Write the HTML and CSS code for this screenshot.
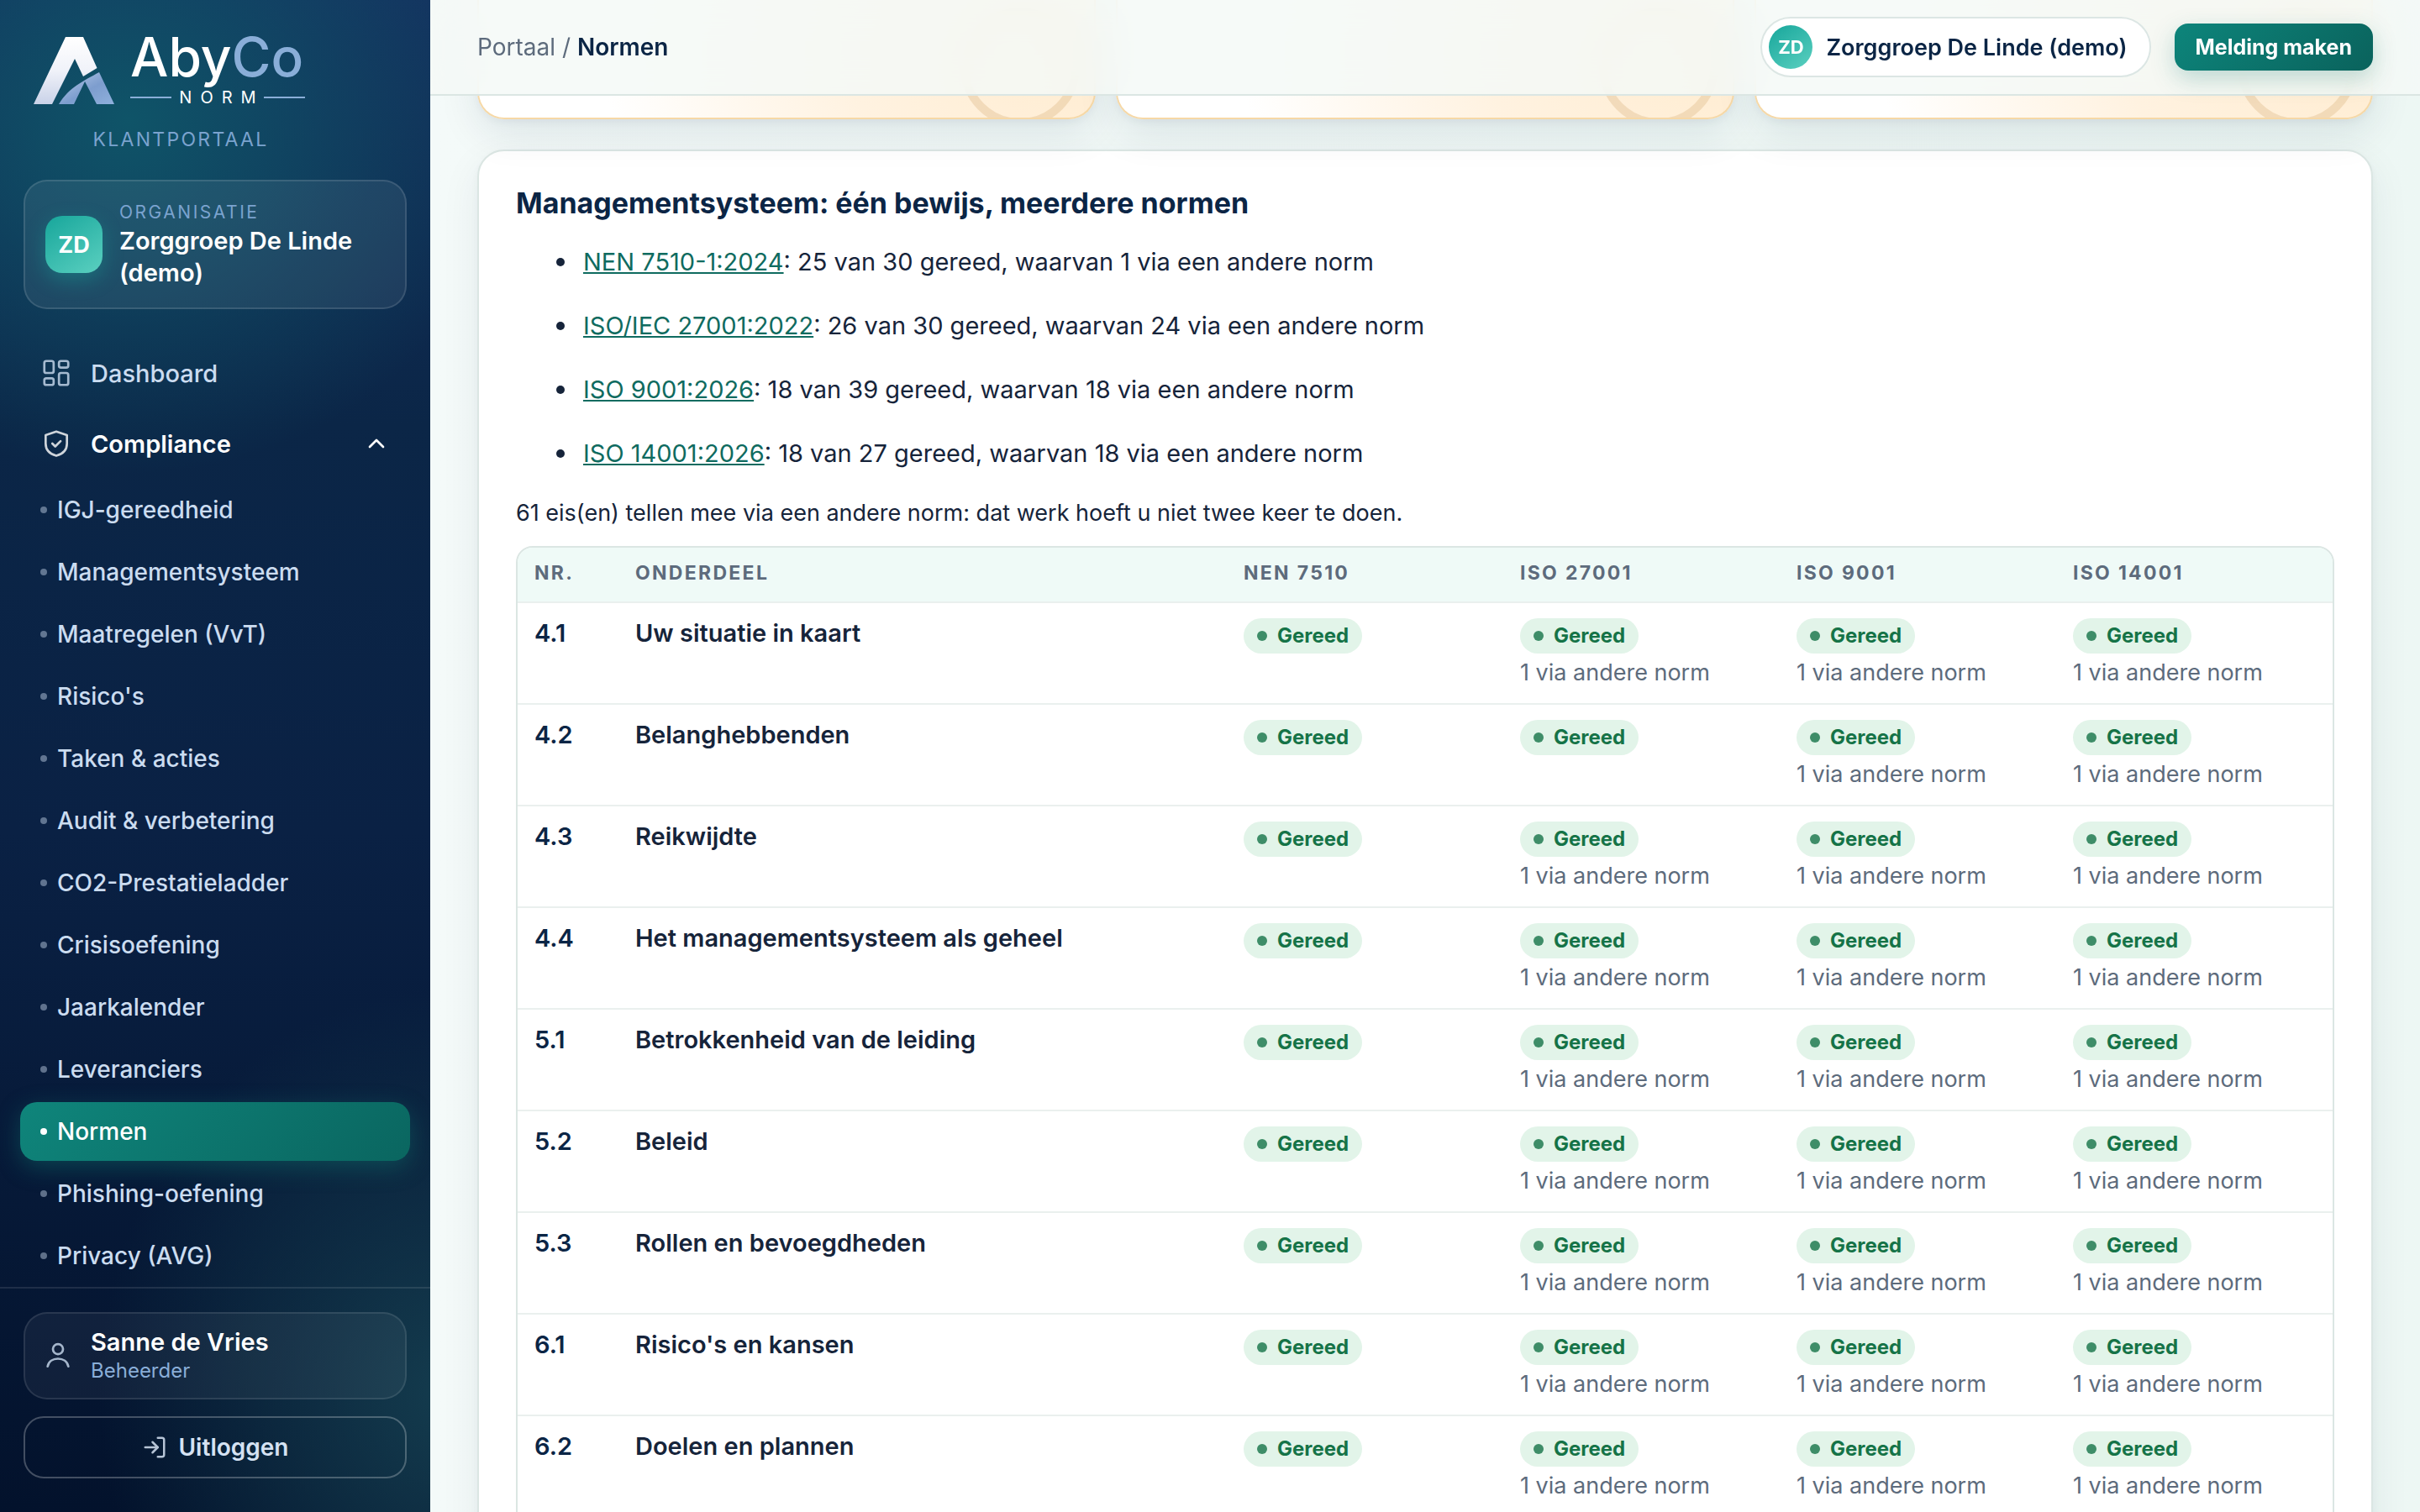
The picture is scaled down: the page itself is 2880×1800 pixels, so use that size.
FILE: index.html
```html
<!DOCTYPE html>
<html lang="nl">
<head>
  <meta charset="UTF-8" />
  <title>Normen - AbyCo Norm klantportaal</title>
  <meta name="viewport" content="width=device-width, initial-scale=1.0" />
  <link rel="stylesheet" href="styles.css">
</head>
<body>

<aside class="sidebar">
  <div class="brand">
    <div class="logo">
      <svg class="logo-mark" viewBox="0 0 97 80" aria-hidden="true">
        <defs>
          <linearGradient id="markLight" x1="0" y1="0" x2="0" y2="1">
            <stop offset="0" stop-color="#ffffff" />
            <stop offset="0.5" stop-color="#f0f2f9" />
            <stop offset="1" stop-color="#c9d2e8" />
          </linearGradient>
          <linearGradient id="markBlue" x1="0" y1="0" x2="1" y2="1">
            <stop offset="0" stop-color="#b9cdea" />
            <stop offset="0.55" stop-color="#7d9dce" />
            <stop offset="1" stop-color="#8fb0dc" />
          </linearGradient>
        </defs>
        <path fill="url(#markLight)" d="M38 0h21l16.500 37L59 47 49 26 22 80H0z" />
        <path fill="url(#markBlue)" d="M78 42l18 38H75L61 53 48 80H30C42 60 60 52 78 42z" />
      </svg>
      <div class="wordmark">
        <span class="wordmark-name">Aby<span>Co</span></span>
        <span class="wordmark-sub"><span>NORM</span></span>
      </div>
    </div>
    <div class="brand-label">KLANTPORTAAL</div>
  </div>

  <div class="org-card">
    <span class="avatar">ZD</span>
    <div>
      <div class="org-label">ORGANISATIE</div>
      <div class="org-name">Zorggroep De Linde (demo)</div>
    </div>
  </div>

  <nav class="nav">
    <a class="nav-item" href="#">
      <svg class="icon" viewBox="0 0 24 24"><rect x="3" y="3" width="7" height="9" rx="1.500" /><rect x="14" y="3" width="7" height="5" rx="1.500" /><rect x="14" y="12" width="7" height="9" rx="1.500" /><rect x="3" y="16" width="7" height="5" rx="1.500" /></svg>
      Dashboard
    </a>
    <button class="nav-item nav-open" type="button" aria-expanded="true">
      <svg class="icon" viewBox="0 0 24 24"><path d="M12 3l8 2.700V12c0 5-3.500 8-8 9.200C7.500 20 4 17 4 12V5.700z" /><path d="M9 12l2.200 2.200L15.200 10.200" /></svg>
      Compliance
      <svg class="chevron" viewBox="0 0 24 24"><path d="M6 15l6-6 6 6" /></svg>
    </button>
    <div class="subnav">
      <a href="#">IGJ-gereedheid</a>
      <a href="#">Managementsysteem</a>
      <a href="#">Maatregelen (VvT)</a>
      <a href="#">Risico's</a>
      <a href="#">Taken &amp; acties</a>
      <a href="#">Audit &amp; verbetering</a>
      <a href="#">CO2-Prestatieladder</a>
      <a href="#">Crisisoefening</a>
      <a href="#">Jaarkalender</a>
      <a href="#">Leveranciers</a>
      <a class="active" href="#">Normen</a>
      <a href="#">Phishing-oefening</a>
      <a href="#">Privacy (AVG)</a>
    </div>
  </nav>

  <div class="sidebar-footer">
    <div class="user-card">
      <svg class="icon" viewBox="0 0 24 24"><circle cx="12" cy="7" r="3.800" /><path d="M4.200 20c.8-3.800 4-5.800 7.800-5.800s7 2 7.800 5.800" /></svg>
      <div>
        <div class="user-name">Sanne de Vries</div>
        <div class="user-role">Beheerder</div>
      </div>
    </div>
    <button class="logout" type="button">
      <svg viewBox="0 0 24 24"><path d="M15 3h4a2 2 0 0 1 2 2v14a2 2 0 0 1-2 2h-4" /><path d="M10 17l5-5-5-5" /><path d="M15 12H3" /></svg>
      Uitloggen
    </button>
  </div>
</aside>

<main class="main">
  <header class="topbar">
    <div class="crumbs"><a href="#">Portaal</a> / <strong>Normen</strong></div>
    <div class="topbar-right">
      <div class="org-pill"><span class="avatar">ZD</span>Zorggroep De Linde (demo)</div>
      <button class="btn" type="button">Melding maken</button>
    </div>
  </header>

  <div class="content">
    <div class="cards">
      <div class="card"></div>
      <div class="card"></div>
      <div class="card"></div>
    </div>

    <section class="panel">
      <h2>Managementsysteem: één bewijs, meerdere normen</h2>
      <ul>
        <li><a href="#">NEN 7510-1:2024</a>: 25 van 30 gereed, waarvan 1 via een andere norm</li>
        <li><a href="#">ISO/IEC 27001:2022</a>: 26 van 30 gereed, waarvan 24 via een andere norm</li>
        <li><a href="#">ISO 9001:2026</a>: 18 van 39 gereed, waarvan 18 via een andere norm</li>
        <li><a href="#">ISO 14001:2026</a>: 18 van 27 gereed, waarvan 18 via een andere norm</li>
      </ul>
      <p>61 eis(en) tellen mee via een andere norm: dat werk hoeft u niet twee keer te doen.</p>

      <div class="table-wrap">
        <table>
          <thead>
            <tr>
              <th class="col-nr">NR.</th>
              <th>ONDERDEEL</th>
              <th class="col-norm">NEN 7510</th>
              <th class="col-norm">ISO 27001</th>
              <th class="col-norm">ISO 9001</th>
              <th class="col-norm">ISO 14001</th>
            </tr>
          </thead>
          <tbody id="normRows"></tbody>
        </table>
      </div>
    </section>
  </div>
</main>

<script>
(() => {
  // number, title, count taken over from another norm per column
  const rows = [
    ['4.1', 'Uw situatie in kaart', [0, 1, 1, 1]],
    ['4.2', 'Belanghebbenden', [0, 0, 1, 1]],
    ['4.3', 'Reikwijdte', [0, 1, 1, 1]],
    ['4.4', 'Het managementsysteem als geheel', [0, 1, 1, 1]],
    ['5.1', 'Betrokkenheid van de leiding', [0, 1, 1, 1]],
    ['5.2', 'Beleid', [0, 1, 1, 1]],
    ['5.3', 'Rollen en bevoegdheden', [0, 1, 1, 1]],
    ['6.1', "Risico's en kansen", [0, 1, 1, 1]],
    ['6.2', 'Doelen en plannen', [0, 1, 1, 1]]
  ];

  const statusCell = via => `<td class="status"><span class="badge">Gereed</span>${via ? `<div class="via">${via} via andere norm</div>` : ''}</td>`;

  document.getElementById('normRows').innerHTML = rows.map(([nr, title, via]) =>
    `<tr><td class="nr">${nr}</td><td class="title">${title}</td>${via.map(statusCell).join('')}</tr>`
  ).join('');
})();
</script>
</body>
</html>
```
FILE: styles.css
```css
*,
*::before,
*::after {
  box-sizing: border-box;
}

body {
  margin: 0;
  height: 100vh;
  display: grid;
  grid-template-columns: 512px 1fr;
  overflow: hidden;
  font-family: Inter, "Liberation Sans", sans-serif;
  color: #16243a;
  background: #f1f8f6;
}

a {
  color: inherit;
  text-decoration: none;
}

button {
  font-family: inherit;
  cursor: pointer;
}

svg {
  flex: none;
  fill: none;
  stroke: currentColor;
  stroke-linecap: round;
  stroke-linejoin: round;
}

/* Sidebar */
.sidebar {
  height: 100vh;
  display: flex;
  flex-direction: column;
  color: #cbdcf0;
  background:
    radial-gradient(460px 420px at 30% 8%, #0f5468 0%, #0f546800 100%),
    radial-gradient(420px 480px at 105% 92%, #143c4e 0%, #143c4e00 100%),
    linear-gradient(180deg, #14305f 0%, #0b2647 28%, #0a2144 55%, #03122c 100%);
}

.brand {
  width: 390px;
  padding: 44px 0 34px 40px;
}

.logo {
  display: flex;
  gap: 18px;
}

.logo-mark {
  width: 97px;
  height: 80px;
  stroke: none;
}

.wordmark {
  width: 208px;
}

.wordmark-name {
  display: block;
  font-size: 64px;
  font-weight: 500;
  line-height: 48px;
  color: #fff;
}

.wordmark-name span {
  color: #8aaed8;
}

.wordmark-sub {
  display: flex;
  align-items: center;
  gap: 9px;
  margin-top: 14px;
  font-size: 20px;
  line-height: 20px;
  color: #fff;
}

.wordmark-sub span {
  letter-spacing: 10px;
  margin-right: -10px;
}

.wordmark-sub::before,
.wordmark-sub::after {
  content: "";
  flex: 1;
  height: 2px;
  background: #8aaed8;
}

.brand-label {
  margin-top: 26px;
  font-size: 23px;
  line-height: 28px;
  letter-spacing: 0.1em;
  text-align: center;
  color: #7ba3cf;
}

.org-card {
  margin: 0 28px;
  padding: 22px 24px;
  display: flex;
  align-items: center;
  gap: 20px;
  border: 2px solid #ffffff1f;
  border-radius: 28px;
  background: #ffffff12;
}

.avatar {
  flex: none;
  width: 68px;
  height: 68px;
  display: flex;
  align-items: center;
  justify-content: center;
  border-radius: 20px;
  font-size: 27px;
  font-weight: 700;
  color: #fff;
  background: linear-gradient(145deg, #17a69b, #5bd0c0);
  box-shadow: 0 8px 24px #14b8a655;
}

.org-label {
  font-size: 21px;
  line-height: 30px;
  letter-spacing: 0.12em;
  color: #7ba3cf;
}

.org-name {
  font-size: 29px;
  font-weight: 600;
  line-height: 38px;
  color: #fff;
}

.nav {
  flex: 1;
  min-height: 0;
  overflow: hidden;
  margin-top: 36px;
  padding: 0 24px;
  display: flex;
  flex-direction: column;
  gap: 4px;
}

.nav-item {
  flex: none;
  height: 80px;
  padding: 0 24px;
  display: flex;
  align-items: center;
  gap: 22px;
  border: 0;
  background: none;
  font-size: 29px;
  font-weight: 500;
  color: #cbdcf0;
}

.nav-open {
  font-weight: 600;
  color: #fff;
}

.icon {
  width: 38px;
  height: 38px;
  stroke-width: 1.7;
  opacity: 0.8;
}

.chevron {
  width: 32px;
  height: 32px;
  margin-left: auto;
  stroke-width: 2;
}

.subnav {
  display: flex;
  flex-direction: column;
  gap: 4px;
}

.subnav a {
  flex: none;
  height: 70px;
  padding: 0 24px;
  display: flex;
  align-items: center;
  gap: 12px;
  border-radius: 20px;
  font-size: 28px;
  font-weight: 500;
}

.subnav a::before {
  content: "";
  width: 8px;
  height: 8px;
  border-radius: 50%;
  background: currentColor;
  opacity: 0.45;
}

.subnav .active {
  color: #fff;
  background: linear-gradient(135deg, #0f857b, #0a6660);
  box-shadow: 0 8px 28px #0f766e73;
}

.subnav .active::before {
  opacity: 1;
}

.sidebar-footer {
  padding: 28px 28px 40px;
  display: flex;
  flex-direction: column;
  gap: 20px;
  border-top: 2px solid #ffffff1a;
}

.user-card {
  padding: 16px 20px;
  display: flex;
  align-items: center;
  gap: 20px;
  border: 2px solid #ffffff1a;
  border-radius: 28px;
  background: #ffffff0d;
}

.user-name {
  font-size: 29px;
  font-weight: 600;
  line-height: 36px;
  color: #fff;
}

.user-role {
  font-size: 24px;
  line-height: 32px;
  color: #8aaed8;
}

.logout {
  height: 74px;
  display: flex;
  align-items: center;
  justify-content: center;
  gap: 14px;
  border: 2px solid #ffffff40;
  border-radius: 24px;
  background: none;
  font-size: 28px;
  font-weight: 600;
  color: #d5e2f3;
}

.logout svg {
  width: 30px;
  height: 30px;
  stroke-width: 2;
  opacity: 0.85;
}

/* Main column */
.main {
  height: 100vh;
  overflow-y: auto;
  scrollbar-width: none;
  background: linear-gradient(90deg, #f4faf9, #edf7f4);
}

.topbar {
  position: sticky;
  top: 0;
  z-index: 2;
  height: 114px;
  padding: 0 56px;
  display: flex;
  align-items: center;
  justify-content: space-between;
  border-bottom: 2px solid #dbe6e3;
  background: #f4f9f7d9;
  backdrop-filter: blur(20px);
}

.crumbs {
  font-size: 28px;
  color: #5d6b7c;
}

.crumbs strong {
  font-weight: 600;
  color: #0b2545;
}

.topbar-right {
  display: flex;
  align-items: center;
  gap: 28px;
}

.org-pill {
  height: 72px;
  padding: 0 26px 0 8px;
  display: flex;
  align-items: center;
  gap: 16px;
  border: 2px solid #dce6e4;
  border-radius: 36px;
  background: #fff;
  font-size: 27px;
  font-weight: 600;
  color: #0b2545;
}

.org-pill .avatar {
  width: 52px;
  height: 52px;
  border-radius: 50%;
  font-size: 22px;
  box-shadow: none;
}

.btn {
  height: 56px;
  padding: 0 25px;
  border: 0;
  border-radius: 16px;
  font-size: 25px;
  font-weight: 700;
  color: #fff;
  background: linear-gradient(135deg, #0d857b, #0a625c);
  box-shadow: 0 10px 28px #0f766e40;
}

.content {
  padding: 0 56px 56px;
}

/* the cards have scrolled away under the topbar */
.cards {
  margin-top: -114px;
  display: grid;
  grid-template-columns: repeat(3, 1fr);
  gap: 24px;
}

.card {
  position: relative;
  height: 142px;
  overflow: hidden;
  border: 2px solid #f6d8a6;
  border-top: 0;
  border-radius: 0 0 32px 32px;
  background: radial-gradient(100% 300% at 100% 50%, #ffecd0 0%, #fff2e0 40%, #fff 80%);
  box-shadow: 0 4px 8px #0b25450a, 0 16px 48px #0b25451a;
}

.card::after {
  content: "";
  position: absolute;
  right: 17px;
  bottom: -11px;
  width: 142px;
  height: 142px;
  border: 10px solid #b478232b;
  border-radius: 50%;
}

.panel {
  margin-top: 36px;
  padding: 40px 44px 44px;
  border: 2px solid #dbe6e3;
  border-radius: 32px;
  background: #fff;
  box-shadow: 0 4px 8px #0b25450a, 0 16px 48px #0b254512;
}

.panel h2 {
  margin: 0 0 25px;
  font-size: 34px;
  font-weight: 700;
  line-height: 44px;
  color: #0b2545;
}

.panel ul {
  margin: 0;
  padding-left: 80px;
  display: flex;
  flex-direction: column;
  gap: 30px;
  list-style: none;
}

.panel li {
  position: relative;
  font-size: 29px;
  line-height: 46px;
}

.panel li::before {
  content: "";
  position: absolute;
  left: -32px;
  top: 18px;
  width: 10px;
  height: 10px;
  border-radius: 50%;
  background: #16243a;
}

.panel li a {
  color: #0f6b60;
  text-decoration: underline;
}

.panel p {
  margin: 26px 0 17px;
  font-size: 27px;
  line-height: 44px;
}

.table-wrap {
  overflow: hidden;
  padding-bottom: 40px;
  border: 2px solid #dbe6e3;
  border-radius: 20px;
}

table {
  width: 100%;
  table-layout: fixed;
  border-spacing: 0;
}

th,
td {
  padding: 14px 20px 12px;
  text-align: left;
  vertical-align: top;
  border-bottom: 2px solid #eaf0ee;
}

th {
  padding: 16px 20px 20px;
  font-size: 23px;
  font-weight: 700;
  line-height: 28px;
  letter-spacing: 0.1em;
  color: #5d6b7c;
  background: #effaf7;
}

.col-nr {
  width: 120px;
}

.col-norm {
  width: 329px;
}

.nr,
.title {
  font-size: 29px;
  font-weight: 600;
  line-height: 44px;
}

.nr {
  color: #0b2545;
}

td.status {
  padding: 18px 20px 14px;
}

.badge {
  width: max-content;
  height: 42px;
  padding: 0 16px;
  display: flex;
  align-items: center;
  gap: 12px;
  border-radius: 21px;
  font-size: 24px;
  font-weight: 700;
  line-height: 38px;
  color: #157347;
  background: #e2f4e9;
}

.badge::before {
  content: "";
  width: 12px;
  height: 12px;
  border-radius: 50%;
  background: currentColor;
  opacity: 0.8;
}

.via {
  margin-top: 1px;
  font-size: 27px;
  line-height: 44px;
  color: #5d6b7c;
}
```
